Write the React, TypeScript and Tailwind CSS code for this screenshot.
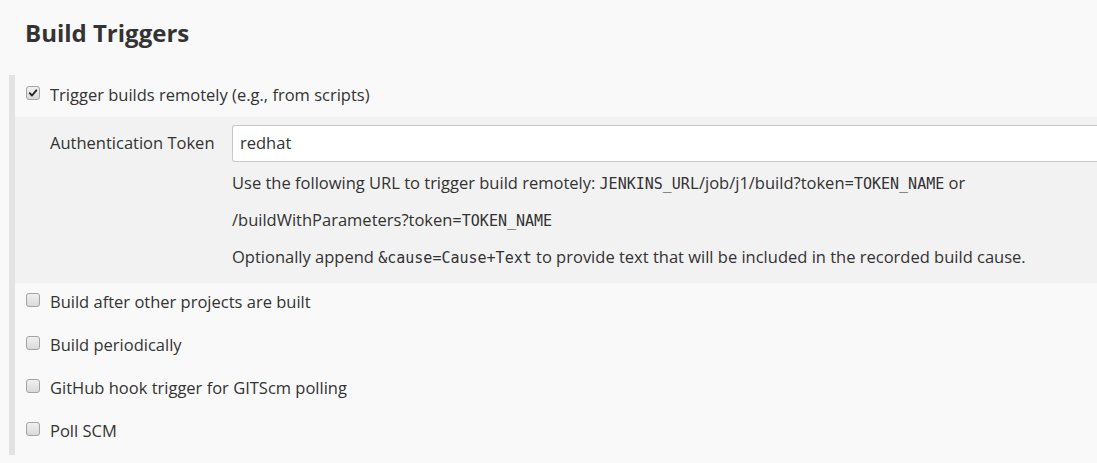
import React from 'react';

const Box: React.FC<{ checked?: boolean }> = ({ checked }) => (
  <span className="flex h-[14px] w-[14px] shrink-0 -translate-y-[2px] items-center justify-center rounded-[3px] border border-[#a3a3a3] bg-gradient-to-b from-[#f0f0f0] to-[#dadada]">
    {checked && (
      <svg viewBox="0 0 12 12" className="h-[10px] w-[10px]">
        <path d="M2 6.2 L4.8 9 L10 2.8" fill="none" stroke="#222" strokeWidth="2.2" strokeLinecap="round" strokeLinejoin="round" />
      </svg>
    )}
  </span>
);

const mono = "font-['DejaVu_Sans_Mono'] text-[15px] leading-none";

export default function App() {
  const others = [
    'Build after other projects are built',
    'Build periodically',
    'GitHub hook trigger for GITScm polling',
    'Poll SCM',
  ];

  return (
    <div className="min-h-screen bg-[#f9f9f9] font-['Open_Sans',sans-serif] text-[#333]">
      <h2 className="pl-[25px] pt-[16px] text-[24px] font-bold leading-[34px]">Build Triggers</h2>

      <div className="ml-[9px] mt-[25px] border-l-[6px] border-[#e3e3e3]">
        <div className="flex h-[42px] items-center gap-[10px] pl-[11px] pb-[2px] text-[16.5px]">
          <Box checked />
          <span>Trigger builds remotely (e.g., from scripts)</span>
        </div>

        <div className="bg-[#f2f2f2] pt-[8px] pb-[8px] text-[16.5px]">
          <div className="flex items-center">
            <span className="w-[217px] shrink-0 pl-[35px]">Authentication Token</span>
            <div className="flex h-[37px] flex-1 items-center rounded-l-[3px] border border-r-0 border-[#c8c8c8] bg-white pl-[7px]">
              redhat
            </div>
          </div>
          <div className="pl-[217px] pt-[2px]">
            <div className="h-[37px] leading-[37px]">
              Use the following URL to trigger build remotely: <span className={mono}>JENKINS_URL</span>/job/j1/build?token=<span className={mono}>TOKEN_NAME</span> or
            </div>
            <div className="h-[37px] leading-[37px]">
              /buildWithParameters?token=<span className={mono}>TOKEN_NAME</span>
            </div>
            <div className="h-[37px] leading-[37px]">
              Optionally append <span className={mono}>&amp;cause=Cause+Text</span> to provide text that will be included in the recorded build cause.
            </div>
          </div>
        </div>

        {others.map((label) => (
          <div key={label} className="flex h-[43px] items-center gap-[10px] pl-[11px] pb-[5px] text-[16.5px]">
            <Box />
            <span>{label}</span>
          </div>
        ))}
      </div>
    </div>
  );
}
